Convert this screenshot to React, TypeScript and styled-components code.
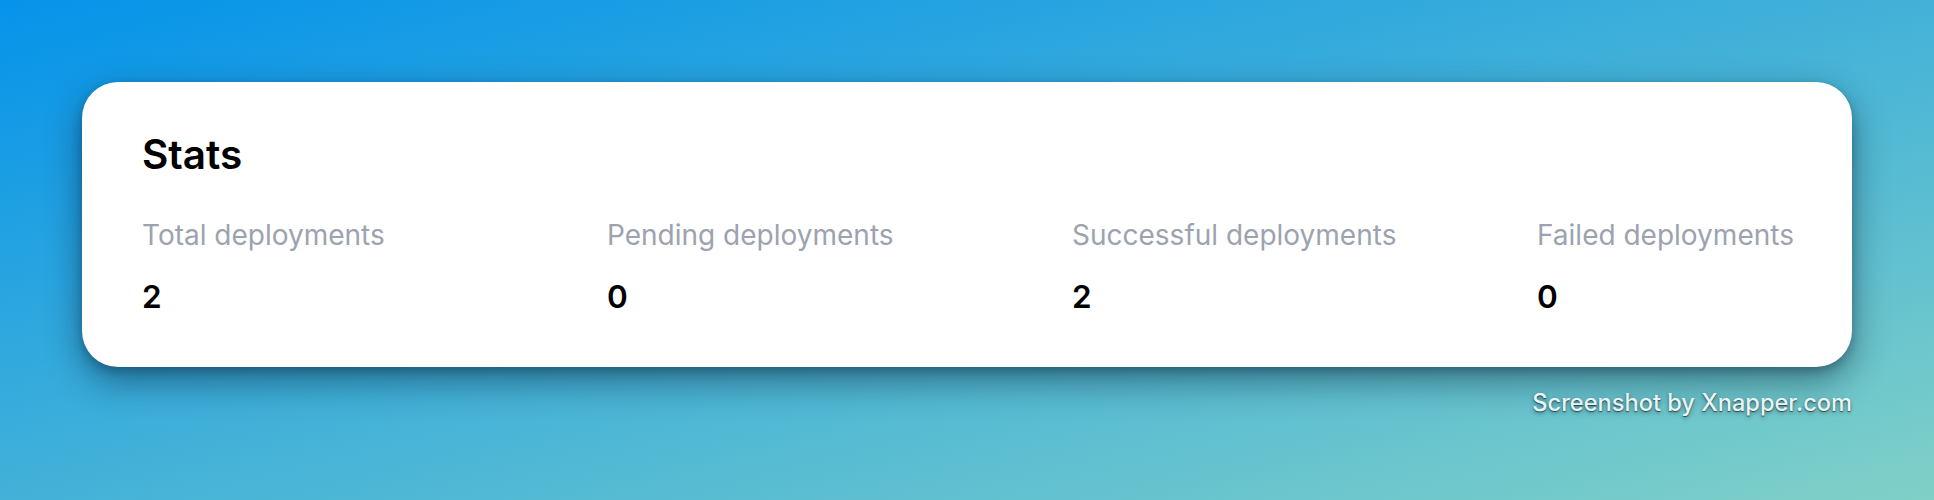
import React from "react";
import styled, { createGlobalStyle } from "styled-components";

const GlobalStyle = createGlobalStyle`
  html, body { margin: 0; padding: 0; }
  body {
    font-family: Inter, "Noto Sans", "Liberation Sans", sans-serif;
    -webkit-font-smoothing: antialiased;
  }
`;

const Backdrop = styled.div`
  width: 1934px;
  height: 500px;
  box-sizing: border-box;
  padding: 82px 82px 0 82px;
  background: linear-gradient(to bottom right, #0593ea, #80d0c7);
  display: flex;
  flex-direction: column;
  align-items: stretch;
  overflow: hidden;
`;

const Card = styled.section`
  background: #ffffff;
  border-radius: 36px;
  padding: 45px 60px 46px 60px;
  box-shadow: 0 14px 36px rgba(0, 20, 40, 0.45), 0 4px 10px rgba(0, 20, 40, 0.25);
  display: flex;
  flex-direction: column;
  gap: 31px;
`;

const Title = styled.h2`
  margin: 0;
  font-size: 40.5px;
  line-height: 56px;
  font-weight: 600;
  color: #000000;
`;

const StatsGrid = styled.div`
  display: grid;
  grid-template-columns: repeat(3, 465px) 1fr;
`;

const Stat = styled.div`
  display: flex;
  flex-direction: column;
  gap: 16px;
`;

const Label = styled.div`
  font-size: 28px;
  line-height: 42px;
  font-weight: 400;
  color: #9ca3af;
  white-space: nowrap;
`;

const Value = styled.div`
  font-size: 31.5px;
  line-height: 49px;
  font-weight: 600;
  color: #000000;
`;

const Credit = styled.div`
  margin-top: 22px;
  align-self: flex-end;
  font-size: 23.6px;
  line-height: 27.6px;
  font-weight: 500;
  color: #e8f4f6;
  text-shadow: 0 1px 1px rgba(0, 0, 0, 0.55), 0 2px 4px rgba(0, 0, 0, 0.35);
`;

const stats = [
  { label: "Total deployments", value: 2 },
  { label: "Pending deployments", value: 0 },
  { label: "Successful deployments", value: 2 },
  { label: "Failed deployments", value: 0 },
];

export default function App() {
  return (
    <>
      <GlobalStyle />
      <Backdrop>
        <Card>
          <Title>Stats</Title>
          <StatsGrid>
            {stats.map((s) => (
              <Stat key={s.label}>
                <Label>{s.label}</Label>
                <Value>{s.value}</Value>
              </Stat>
            ))}
          </StatsGrid>
        </Card>
        <Credit>Screenshot by Xnapper.com</Credit>
      </Backdrop>
    </>
  );
}
